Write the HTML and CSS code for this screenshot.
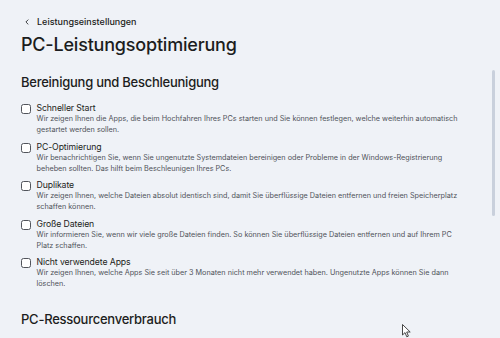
FILE: index.html
```html
<!DOCTYPE html>
<html lang="de">
<head>
    <meta charset="UTF-8">
    <title>PC-Leistungsoptimierung</title>
    <link rel="stylesheet" href="styles.css">
</head>
<body>
    <div class="page">
        <a class="back" href="#">
            <svg class="chev" width="4" height="6" viewBox="0 0 4 6"><path d="M3.3 0.6 L0.9 3 L3.3 5.4" fill="none" stroke="#2a2c30" stroke-width="0.9"/></svg>
            Leistungseinstellungen
        </a>
        <h1>PC-Leistungsoptimierung</h1>

        <h2>Bereinigung und Beschleunigung</h2>
        <div class="options">
            <label class="option">
                <input type="checkbox">
                <span class="box"></span>
                <span class="text">
                    <span class="name">Schneller Start</span>
                    <span class="desc">Wir zeigen Ihnen die Apps, die beim Hochfahren Ihres PCs starten und Sie können festlegen, welche weiterhin automatisch gestartet werden sollen.</span>
                </span>
            </label>
            <label class="option">
                <input type="checkbox">
                <span class="box"></span>
                <span class="text">
                    <span class="name">PC-Optimierung</span>
                    <span class="desc">Wir benachrichtigen Sie, wenn Sie ungenutzte Systemdateien bereinigen oder Probleme in der Windows-Registrierung beheben sollten. Das hilft beim Beschleunigen Ihres PCs.</span>
                </span>
            </label>
            <label class="option">
                <input type="checkbox">
                <span class="box"></span>
                <span class="text">
                    <span class="name">Duplikate</span>
                    <span class="desc">Wir zeigen Ihnen, welche Dateien absolut identisch sind, damit Sie überflüssige Dateien entfernen und freien Speicherplatz schaffen können.</span>
                </span>
            </label>
            <label class="option">
                <input type="checkbox">
                <span class="box"></span>
                <span class="text">
                    <span class="name">Große Dateien</span>
                    <span class="desc">Wir informieren Sie, wenn wir viele große Dateien finden. So können Sie überflüssige Dateien entfernen und auf Ihrem PC Platz schaffen.</span>
                </span>
            </label>
            <label class="option">
                <input type="checkbox">
                <span class="box"></span>
                <span class="text">
                    <span class="name">Nicht verwendete Apps</span>
                    <span class="desc">Wir zeigen Ihnen, welche Apps Sie seit über 3 Monaten nicht mehr verwendet haben. Ungenutzte Apps können Sie dann löschen.</span>
                </span>
            </label>
        </div>

        <h2 class="second">PC-Ressourcenverbrauch</h2>
    </div>

    <div class="scrollbar"></div>

    <!-- mouse pointer -->
    <svg class="cursor" width="10" height="14" viewBox="0 0 10 14">
        <path d="M0.5 0.5 L0.5 11 L3 8.6 L4.8 12.8 L6.4 12.1 L4.7 8 L8.2 8 Z" fill="#fff" stroke="#333" stroke-width="0.9" stroke-linejoin="round"/>
    </svg>
</body>
</html>
```

FILE: styles.css
```css
html, body {
    margin: 0;
    height: 100%;
    overflow: hidden;
}

body {
    background-color: #eff2f7;
    font-family: Inter, "Noto Sans", sans-serif;
    color: #1c1d20;
    position: relative;
}

.page {
    padding: 14px 40px 0 21px;
}

.back {
    display: flex;
    align-items: center;
    gap: 8px;
    font-size: 9px;
    font-weight: 500;
    color: #1c1d20;
    text-decoration: none;
    margin-left: 4px;
    height: 14px;
}

.chev {
    flex: none;
    margin-top: 1px;
}

h1 {
    font-size: 18px;
    font-weight: 500;
    margin: 5px 0 0;
    line-height: 24px;
    letter-spacing: -0.2px;
}

h2 {
    font-size: 13px;
    font-weight: 500;
    margin: 16px 0 0;
    line-height: 18px;
    letter-spacing: -0.25px;
}

h2.second {
    margin-top: 21px;
}

.options {
    display: flex;
    flex-direction: column;
    gap: 6.5px;
    margin-top: 12px;
}

.option {
    display: flex;
    gap: 5.5px;
    cursor: pointer;
}

.option input {
    display: none;
}

.box {
    flex: none;
    box-sizing: border-box;
    width: 10px;
    height: 10px;
    border: 1px solid #51545b;
    border-radius: 2.5px;
    background: #fff;
    margin-top: 1px;
}

.text {
    display: flex;
    flex-direction: column;
}

.name {
    font-size: 8.7px;
    line-height: 10px;
    letter-spacing: -0.1px;
}

.desc {
    max-width: 425px;
    font-size: 7.25px;
    line-height: 11px;
    color: #50535a;
}

.scrollbar {
    position: absolute;
    right: 5px;
    top: 70px;
    width: 3px;
    height: 146px;
    background: #c9d0dc;
    border-radius: 2px;
}

.cursor {
    position: absolute;
    left: 402px;
    top: 324px;
}
```
